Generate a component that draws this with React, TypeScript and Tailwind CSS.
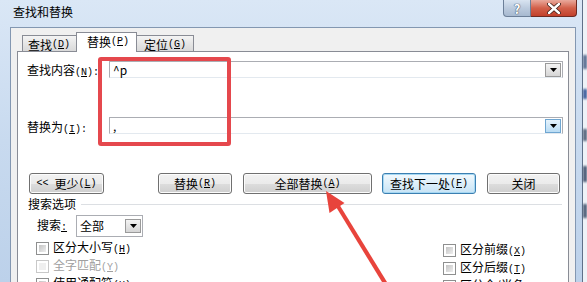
import type { ReactNode } from "react";

const font = "font-['Noto_Sans_CJK_SC','Noto_Sans',sans-serif]";
const mono = "font-['Liberation_Mono','DejaVu_Sans_Mono',monospace] text-[10px]";

function Key({ k, tail = "" }: { k: string; tail?: string }) {
  return (
    <span className={mono}>
      (<span className="underline underline-offset-1">{k}</span>){tail}
    </span>
  );
}

function DropArrow({ hover = false }: { hover?: boolean }) {
  return (
    <div
      className={`flex h-[14px] w-[16px] shrink-0 items-center justify-center border ${
        hover ? "border-[#6fa6d1] bg-gradient-to-b from-[#e6f3fc] to-[#b9dcf4]" : "border-[#9a9a9a] bg-gradient-to-b from-[#f4f4f4] to-[#d6d6d6]"
      }`}
    >
      <svg width="7" height="4" viewBox="0 0 7 4">
        <polygon points="0,0 7,0 3.5,4" fill="#000" />
      </svg>
    </div>
  );
}

function Button({ children, width, focused = false, className = "" }: { children: ReactNode; width: string; focused?: boolean; className?: string }) {
  return (
    <div
      className={`flex h-[21px] items-center justify-center rounded-[3px] border ${width} ${className} ${
        focused
          ? "border-[#3c7fb1] bg-gradient-to-b from-[#f3f9fd] via-[#ddeffa] to-[#c7e3f5] shadow-[inset_0_0_0_1px_#a6d8f3]"
          : "border-[#707070] bg-[linear-gradient(#f2f2f2_0%,#ebebeb_50%,#dddddd_51%,#cfcfcf_100%)] shadow-[inset_0_0_0_1px_#fcfcfc]"
      }`}
    >
      {children}
    </div>
  );
}

function Check({ children, disabled = false }: { children: ReactNode; disabled?: boolean }) {
  return (
    <div className="flex h-[18px] items-center">
      <div className={`h-[13px] w-[13px] border bg-white p-[2px] ${disabled ? "border-[#c8c8c8]" : "border-[#8e8f8f]"}`}>
        <div className={`h-full w-full ${disabled ? "bg-[#efefef]" : "bg-gradient-to-br from-[#c4c4c4] to-[#eeeeee]"}`} />
      </div>
      <span className={`ml-[4px] ${disabled ? "text-[#a0a0a0]" : "text-black"}`}>{children}</span>
    </div>
  );
}

export default function App() {
  return (
    <div className={`relative flex h-[282px] w-[587px] overflow-hidden bg-[#e8eef5] text-[12px] leading-none text-black ${font}`}>
      <div className="flex w-[583px] shrink-0 flex-col border-r border-[#5f7089] bg-gradient-to-b from-[#dae7f6] via-[#c8daef] to-[#bcd1ea]">
        {/* title bar */}
        <div className="flex h-[27px] shrink-0 items-start">
          <span className="pl-[13px] pt-[6px] text-[12px]">查找和替换</span>
          <div className="ml-auto mr-[5px] flex">
            <div className="flex h-[17px] w-[28px] items-center justify-center rounded-bl-[4px] border border-t-0 border-[#6c7f98] bg-gradient-to-b from-[#d9e4f1] via-[#bccbde] to-[#a7b9d0]">
              <span className="text-[13px] font-bold text-white [text-shadow:0_0_1px_#2d3c52,0_0_1px_#2d3c52]">?</span>
            </div>
            <div className="flex h-[17px] w-[46px] items-center justify-center rounded-br-[4px] border border-l-0 border-t-0 border-[#6c2a22] bg-gradient-to-b from-[#e9a99c] via-[#d2604a] to-[#c2402b]">
              <svg width="14" height="11" viewBox="0 0 14 11">
                <path d="M2 1 L12 10 M12 1 L2 10" stroke="#3b1a14" strokeWidth="4" strokeLinecap="round" />
                <path d="M2 1 L12 10 M12 1 L2 10" stroke="#fff" strokeWidth="2.4" strokeLinecap="round" />
              </svg>
            </div>
          </div>
        </div>

        {/* client area */}
        <div className="ml-[10px] mr-[6px] flex flex-1 flex-col border border-b-0 border-[#8397b1] bg-[#f0f0f0] px-[6px] pt-[4px]">
          <div className="relative z-10 -mb-px flex h-[20px] items-end pl-[5px]">
            <div className="mb-px flex h-[16px] w-[55px] items-center border border-b-0 border-[#898c95] bg-gradient-to-b from-[#f4f4f4] via-[#e6e6e6] to-[#d9d9d9] pl-[5px] pt-[2px]">
              查找<Key k="D" />
            </div>
            <div className="-ml-px flex h-[20px] w-[61px] items-center border border-b-0 border-[#898c95] bg-white pl-[10px] pb-[2px]">
              替换<Key k="P" />
            </div>
            <div className="-ml-px mb-px flex h-[16px] w-[58px] items-center border border-b-0 border-[#898c95] bg-gradient-to-b from-[#f4f4f4] via-[#e6e6e6] to-[#d9d9d9] pl-[7px] pt-[2px]">
              定位<Key k="G" />
            </div>
          </div>

          <div className="flex flex-1 flex-col border border-b-0 border-[#898c95] bg-white pl-[9px] pr-[5px] pt-[9px]">
            <div className="flex h-[17px] items-center">
              <span className="w-[82px] pt-[2px]">
                查找内容<Key k="N" tail=":" />
              </span>
              <div className="flex h-[17px] flex-1 items-center border border-[#abadb3] border-b-[#e3e9ef] pl-[3px]">
                <span className="flex-1">^p</span>
                <div className="mr-px">
                  <DropArrow />
                </div>
              </div>
            </div>

            <div className="mt-[39px] flex h-[17px] items-center">
              <span className="w-[82px] pt-[4px]">
                替换为<Key k="I" tail=":" />
              </span>
              <div className="flex h-[17px] flex-1 items-center border border-[#abadb3] border-b-[#e3e9ef] pl-[3px]">
                <span className="flex-1">,</span>
                <div className="mr-px">
                  <DropArrow hover />
                </div>
              </div>
            </div>

            <div className="mt-[39px] flex">
              <Button width="w-[75px]" className="ml-[2px]">
                <span className={`${mono} mr-[6px]`}>&lt;&lt;</span>更少<Key k="L" />
              </Button>
              <Button width="w-[74px]" className="ml-[54px]">
                替换<Key k="R" />
              </Button>
              <Button width="w-[129px]" className="ml-[11px]">
                全部替换<Key k="A" />
              </Button>
              <Button width="w-[94px]" focused className="ml-[10px]">
                查找下一处<Key k="F" />
              </Button>
              <Button width="w-[73px]" className="ml-[11px]">
                关闭
              </Button>
            </div>

            <div className="mt-[3px] flex h-[14px] items-center">
              <span className="ml-px">搜索选项</span>
              <div className="ml-[5px] mr-px h-px flex-1 bg-[#dcdfe3]" />
            </div>

            <div className="mt-[4px] flex h-[22px] items-center">
              <span className="ml-[10px] w-[39px]">
                搜索<span className={`${mono} underline underline-offset-1`}>:</span>
              </span>
              <div className="flex h-[22px] w-[67px] items-center border border-[#abadb3] bg-white pl-[3px]">
                <span className="flex-1">全部</span>
                <div className="mr-px">
                  <DropArrow />
                </div>
              </div>
            </div>

            <div className="mt-[2px] flex">
              <div className="ml-[9px] flex w-[407px] flex-col">
                <Check>
                  区分大小写<Key k="H" />
                </Check>
                <Check disabled>
                  全字匹配<Key k="Y" />
                </Check>
                <Check>
                  使用通配符<Key k="U" />
                </Check>
              </div>
              <div className="mt-[2px] flex flex-col">
                <Check>
                  区分前缀<Key k="X" />
                </Check>
                <Check>
                  区分后缀<Key k="T" />
                </Check>
                <Check>
                  区分全/半角<Key k="M" />
                </Check>
              </div>
            </div>
          </div>
        </div>
      </div>

      {/* blurred background behind window */}
      <div className="flex w-[4px] flex-col bg-[#eef2f7]">
        <div className="mt-[55px] h-[14px] bg-[#5b6f92] blur-[1px]" />
        <div className="mt-[20px] h-[10px] bg-[#3f5e9c] blur-[1px]" />
        <div className="mt-[30px] h-[12px] bg-[#56657d] blur-[1px]" />
        <div className="mt-[25px] h-[16px] bg-[#4a5a75] blur-[1px]" />
        <div className="mt-[22px] h-[14px] bg-[#4f5f78] blur-[1px]" />
      </div>

      {/* annotations */}
      <div className="pointer-events-none absolute left-[98px] top-[57px] h-[89px] w-[133px] rounded-[3px] border-[4px] border-[#e5484d]" />
      <svg className="pointer-events-none absolute left-0 top-0" width="587" height="282" viewBox="0 0 587 282">
        <polygon points="326,191 329.5,213 344.5,203" fill="#e8443c" />
        <polygon points="335.5,206 339,204 387,282 382,282" fill="#e8443c" />
      </svg>
    </div>
  );
}
